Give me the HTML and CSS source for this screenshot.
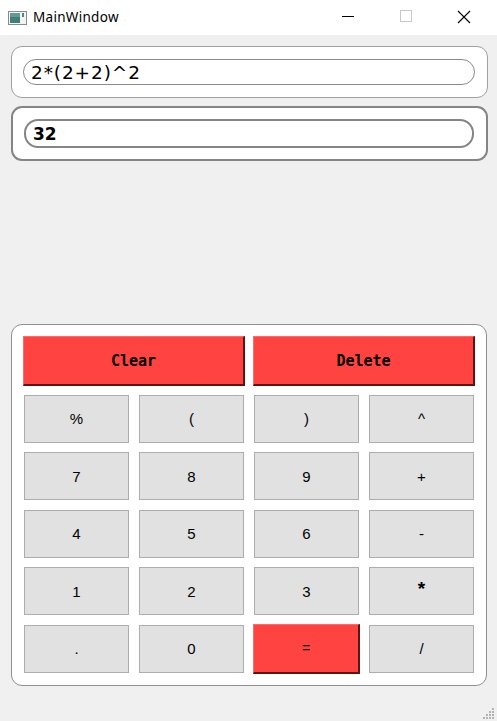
FILE: index.html
```html
<!DOCTYPE html>
<html>
<head>
<meta charset="utf-8">
<link rel="stylesheet" href="styles.css">
</head>
<body>
<div class="window">
  <div class="titlebar">
    <svg class="app-icon" width="19" height="14" viewBox="0 0 19 14">
      <rect x="0.5" y="0.5" width="18" height="13" fill="#f4f4f4" stroke="#8a8a8a"/>
      <rect x="2" y="2" width="10" height="10" fill="#3f7f78"/>
      <rect x="2" y="2" width="10" height="4" fill="#5f9c94"/>
      <rect x="14" y="2" width="2" height="4" fill="#4a8a82"/>
    </svg>
    <span class="title">MainWindow</span>
    <div class="controls">
      <svg class="ctl" width="58" height="35" viewBox="0 0 58 35"><line x1="23" y1="16.5" x2="35" y2="16.5" stroke="#000" stroke-width="1"/></svg>
      <svg class="ctl" width="58" height="35" viewBox="0 0 58 35"><rect x="23.5" y="10.5" width="11" height="11" fill="none" stroke="#c8c8c8"/></svg>
      <svg class="ctl" width="58" height="35" viewBox="0 0 58 35"><path d="M23 11 L35 23 M35 11 L23 23" stroke="#000" stroke-width="1.1"/></svg>
    </div>
  </div>
  <div class="content">
    <div class="panel expr-panel">
      <div class="field expr-field">2*(2+2)^2</div>
    </div>
    <div class="panel result-panel">
      <div class="field result-field">32</div>
    </div>
    <div class="panel keypad">
      <button class="key red wide">Clear</button>
      <button class="key red wide">Delete</button>
      <button class="key">%</button>
      <button class="key">(</button>
      <button class="key">)</button>
      <button class="key">^</button>
      <button class="key">7</button>
      <button class="key">8</button>
      <button class="key">9</button>
      <button class="key">+</button>
      <button class="key">4</button>
      <button class="key">5</button>
      <button class="key">6</button>
      <button class="key">-</button>
      <button class="key">1</button>
      <button class="key">2</button>
      <button class="key">3</button>
      <button class="key star">*</button>
      <button class="key">.</button>
      <button class="key">0</button>
      <button class="key red eq">=</button>
      <button class="key">/</button>
    </div>
  </div>
  <svg class="grip" width="12" height="12" viewBox="0 0 12 12">
    <g fill="#b4b4b4">
      <rect x="9" y="0" width="2" height="2"/>
      <rect x="6" y="3" width="2" height="2"/><rect x="9" y="3" width="2" height="2"/>
      <rect x="3" y="6" width="2" height="2"/><rect x="6" y="6" width="2" height="2"/><rect x="9" y="6" width="2" height="2"/>
      <rect x="0" y="9" width="2" height="2"/><rect x="3" y="9" width="2" height="2"/><rect x="6" y="9" width="2" height="2"/><rect x="9" y="9" width="2" height="2"/>
    </g>
  </svg>
</div>
</body>
</html>
```
FILE: styles.css
```css
html, body {
  margin: 0;
  padding: 0;
}
body {
  background: #f0f0f0;
  width: 497px;
  height: 721px;
  overflow: hidden;
}
.window {
  position: relative;
  width: 497px;
  height: 721px;
  display: flex;
  flex-direction: column;
}
.titlebar {
  height: 35px;
  background: #ffffff;
  display: flex;
  align-items: center;
  flex-shrink: 0;
}
.app-icon {
  margin-left: 8px;
  margin-top: 1px;
}
.title {
  margin-left: 6px;
  font-family: "Noto Sans", "Open Sans", sans-serif;
  font-size: 13.5px;
  letter-spacing: 0.3px;
  color: #000;
  margin-top: -1px;
}
.controls {
  margin-left: auto;
  display: flex;
  margin-right: 4px;
}
.ctl {
  display: block;
}
.content {
  display: flex;
  flex-direction: column;
  padding: 11px 10px 0 11px;
}
.panel {
  background: #ffffff;
  box-sizing: border-box;
  width: 477px;
}
.expr-panel {
  border: 1px solid #a0a0a0;
  border-radius: 11px;
  padding: 12px 12px 12px 11px;
}
.result-panel {
  margin-top: 8px;
  border: 2px solid #858585;
  border-radius: 11px;
  padding: 11px 12px 11px 11px;
}
.field {
  box-sizing: border-box;
  display: flex;
  align-items: center;
  color: #000;
}
.expr-field {
  height: 26px;
  border: 1px solid #8a8a8a;
  border-radius: 13px;
  padding-left: 7px;
  font-family: "DejaVu Sans", sans-serif;
  font-size: 18.5px;
  letter-spacing: 0.9px;
}
.result-field {
  height: 29px;
  border: 2px solid #858585;
  border-radius: 14px;
  padding-left: 7px;
  font-family: "DejaVu Sans", sans-serif;
  font-weight: bold;
  font-size: 17px;
}
.keypad {
  margin-top: 163px;
  border: 1px solid #909090;
  border-radius: 11px;
  width: 476px;
  padding: 12px;
  display: grid;
  grid-template-columns: repeat(4, 105px);
  grid-template-rows: repeat(6, 48px);
  column-gap: 10px;
  row-gap: 9.6px;
}
.key {
  margin: 0;
  box-sizing: border-box;
  background: #e1e1e1;
  border: 1px solid #adadad;
  font-family: "Liberation Sans", Arial, sans-serif;
  font-size: 15px;
  color: #000;
  padding: 0;
  display: flex;
  align-items: center;
  justify-content: center;
}
.star {
  font-size: 19px;
  font-weight: bold;
  padding-bottom: 4px;
}
.key.red {
  background: #ff4340;
  margin: -1px;
  border-style: solid;
  border-width: 1px 2px 2px 1px;
  border-color: #ff6a66 #5e1412 #5e1412 #ff6a66;
}
.wide {
  grid-column: span 2;
  font-family: "DejaVu Sans Mono", "Liberation Mono", monospace;
  font-weight: bold;
  font-size: 15px;
}
.eq {
  font-size: 14px;
}
.grip {
  position: absolute;
  right: 2px;
  bottom: 1px;
}
```
